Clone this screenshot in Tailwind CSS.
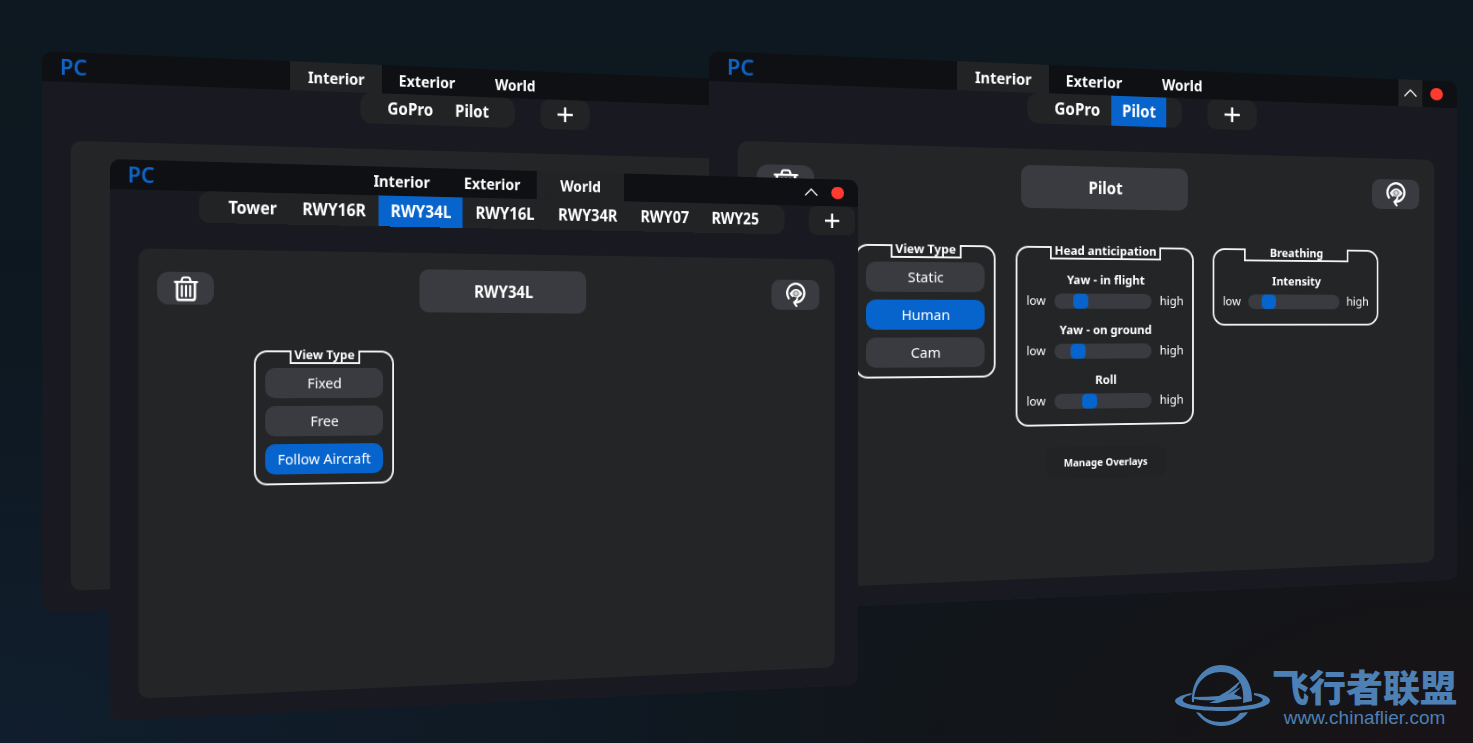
<!DOCTYPE html>
<html lang="en">
<head>
<meta charset="utf-8">
<meta name="viewport" content="width=device-width, initial-scale=1">
<title>PC camera views</title>
<script src="https://cdn.jsdelivr.net/npm/@tailwindcss/browser@4"></script>
</head>
<body class="bg-[#0d161e]">
<svg class="hidden" aria-hidden="true">
  <symbol id="trash" viewBox="0 0 26 26">
    <path d="M1.500 6.200h23M8.200 5.600l1-3.200q.3-.9 1.300-.9h5q1 0 1.300.9l1 3.200" fill="none" stroke="currentColor" stroke-width="2.200" stroke-linecap="round"/>
    <path d="M3.800 6.500v15.200q0 2.600 2.600 2.600h13.200q2.600 0 2.600-2.600V6.500" fill="none" stroke="currentColor" stroke-width="2.600"/>
    <path d="M8.700 10v10.500M13 10v10.500M17.300 10v10.500" fill="none" stroke="currentColor" stroke-width="2.200" stroke-linecap="round"/>
  </symbol>
  <symbol id="reset" viewBox="0 0 26 27">
    <path d="M4.200 17.400A10.600 10.200 0 1 1 14 21.700" fill="none" stroke="currentColor" stroke-width="2.600" stroke-linecap="round"/>
    <path d="M6.300 12.200Q9.500 7.800 13.300 7.800T20 12.200Q18.500 14.500 16 15.500Q14 17 14 19L12 24M9 15.300Q7.400 14 6.300 12.200" fill="none" stroke="currentColor" stroke-width="1.800" stroke-linecap="round"/>
    <path d="M6.300 12.200Q9.500 7.800 13.300 7.800T20 12.200Q17 16.200 13.300 16.200T6.300 12.200z" fill="currentColor" opacity=".8"/>
    <circle cx="13.300" cy="12" r="2.700" fill="none" stroke="#77787d" stroke-width="1"/>
    <path d="M14.800 18.500l-4 3.400l3 4.100" fill="none" stroke="currentColor" stroke-width="2.200" stroke-linecap="round"/>
  </symbol>
  <symbol id="caret" viewBox="0 0 18 10">
    <path d="M1.500 8.500L9 1.500l7.500 7" fill="none" stroke="currentColor" stroke-width="1.600"/>
  </symbol>
  <symbol id="plus" viewBox="0 0 18 16">
    <path d="M0 8h18M9 0v16" fill="none" stroke="currentColor" stroke-width="2.600"/>
  </symbol>
</svg>

<main class="relative min-h-screen overflow-hidden bg-[radial-gradient(ellipse_at_100%_100%,#191317_0%,#141518_16%,transparent_42%),radial-gradient(ellipse_at_0%_100%,#101d2c_0%,transparent_45%),linear-gradient(#0d1820,#0e171e)] font-['Noto_Sans'] text-white">

  <!-- Back left window -->
  <section aria-label="Interior views" class="absolute left-[42px] top-[51px] w-[845px] origin-[0_270px] rounded-[10px] bg-[#191a21] pb-[21px] [transform:perspective(322px)_rotateY(2.8deg)]">
    <header class="grid h-[30px] grid-cols-[1fr_auto_1fr] rounded-t-[10px] bg-[#0f1013]">
      <h2 class="flex h-7 items-center pl-[18px] text-[22px] font-semibold leading-7 text-[#0e65c8]">PC</h2>
      <nav class="mr-[26px] grid w-[303px] grid-cols-3 text-base font-bold">
        <button class="bg-[#222325] pt-px">Interior</button>
        <button class="pt-px">Exterior</button>
        <button class="pt-px">World</button>
      </nav>
    </header>
    <div class="grid grid-cols-[1fr_auto_1fr] text-[17px] font-bold">
      <div class="col-start-2 flex h-8 gap-px rounded-[12px] bg-[#222325] px-[18px]">
        <button class="px-3">GoPro</button>
        <button class="px-3">Pilot</button>
      </div>
      <button aria-label="Add view" class="ml-[30px] flex h-8 w-[58px] items-center justify-center rounded-[10px] bg-[#222325]"><svg class="h-4 w-[18px]"><use href="#plus"/></svg></button>
    </div>
    <div class="mx-[29px] mt-[27px] min-h-[452px] rounded-[10px] bg-[#232526]"></div>
  </section>

  <!-- Back right window -->
  <section aria-label="Pilot view" class="absolute left-[709px] top-[51px] w-[845px] origin-[0_270px] rounded-[10px] bg-[#191a21] pb-[21px] [transform:perspective(322px)_rotateY(2.8deg)]">
    <header class="grid h-[30px] grid-cols-[1fr_auto_1fr] rounded-t-[10px] bg-[#0f1013]">
      <h2 class="flex h-7 items-center pl-[18px] text-[22px] font-semibold leading-7 text-[#0e65c8]">PC</h2>
      <nav class="mr-[26px] grid w-[303px] grid-cols-3 text-base font-bold">
        <button class="bg-[#222325] pt-px">Interior</button>
        <button class="pt-px">Exterior</button>
        <button class="pt-px">World</button>
      </nav>
      <div class="flex items-center justify-end gap-[10px] pr-[18px]">
        <button aria-label="Collapse" class="flex h-[30px] w-[30px] items-center justify-center bg-[#222325]"><svg class="h-[10px] w-[18px]"><use href="#caret"/></svg></button>
        <button aria-label="Close" class="h-[14px] w-4 rounded-[50%] bg-[#ff3b30]"></button>
      </div>
    </header>
    <div class="grid grid-cols-[1fr_auto_1fr] text-[17px] font-bold">
      <div class="col-start-2 flex h-8 gap-px rounded-[12px] bg-[#222325] px-[18px]">
        <button class="px-3">GoPro</button>
        <button class="bg-[#0664cc] px-3">Pilot</button>
      </div>
      <button aria-label="Add view" class="ml-[30px] flex h-8 w-[58px] items-center justify-center rounded-[10px] bg-[#222325]"><svg class="h-4 w-[18px]"><use href="#plus"/></svg></button>
    </div>
    <div class="mx-[29px] mt-[27px] min-h-[452px] rounded-[10px] bg-[#232526] px-[19px] pt-[17px]">
      <div class="flex items-center justify-between">
        <button aria-label="Delete view" class="flex h-[33px] w-[59px] items-center justify-center rounded-[12px] bg-[#3a3b40]"><svg class="h-[26px] w-[26px]"><use href="#trash"/></svg></button>
        <button class="h-[45px] w-[189px] rounded-[10px] bg-[#3a3b40] text-[17px] font-bold">Pilot</button>
        <button aria-label="Reset view" class="flex h-[33px] w-[59px] items-center justify-center rounded-[10px] bg-[#3a3b40]"><svg class="h-[27px] w-[26px]"><use href="#reset"/></svg></button>
      </div>
      <div class="ml-[101px] mt-10 grid grid-cols-[151px_202px_200px] items-start gap-x-[22px]">
        <div role="group" aria-labelledby="vt2" class="relative flex flex-col gap-2 rounded-[14px] border-2 border-[#f2f2f3] px-[10px] pb-[9px] pt-4 text-[15px]">
          <h3 id="vt2" class="absolute -top-[2px] left-1/2 h-[14px] w-[76px] -translate-x-1/2 border-x-2 border-b-2 border-[#f2f2f3] bg-[#232526] text-center text-[13px] font-bold leading-[8px]">View Type</h3>
          <button class="h-[31px] rounded-[10px] bg-[#3a3b40]">Static</button>
          <button class="h-[31px] rounded-[10px] bg-[#0664cc]">Human</button>
          <button class="h-[31px] rounded-[10px] bg-[#3a3b40]">Cam</button>
        </div>
        <div role="group" aria-labelledby="ha" class="relative rounded-[14px] border-2 border-[#f2f2f3] px-[10px] pb-[14px] pt-[23px] text-center text-[13px]">
          <h3 id="ha" class="absolute -top-[2px] left-1/2 h-[14px] w-[126px] -translate-x-1/2 whitespace-nowrap border-x-2 border-b-2 border-[#f2f2f3] bg-[#232526] text-[13px] font-bold leading-[8px]">Head anticipation</h3>
          <div class="flex flex-col gap-[10px]">
            <div>
              <label for="yf" class="block font-bold leading-5">Yaw - in flight</label>
              <div class="mt-[3px] flex h-5 items-center justify-between"><span>low</span><input id="yf" type="range" min="0" max="100" value="23" class="h-4 w-[110px] appearance-none rounded-full bg-[#3a3b40] [&::-webkit-slider-thumb]:h-4 [&::-webkit-slider-thumb]:w-[17px] [&::-webkit-slider-thumb]:appearance-none [&::-webkit-slider-thumb]:rounded-[5px] [&::-webkit-slider-thumb]:bg-[#0664cc]"><span>high</span></div>
            </div>
            <div>
              <label for="yg" class="block font-bold leading-5">Yaw - on ground</label>
              <div class="mt-[3px] flex h-5 items-center justify-between"><span>low</span><input id="yg" type="range" min="0" max="100" value="20" class="h-4 w-[110px] appearance-none rounded-full bg-[#3a3b40] [&::-webkit-slider-thumb]:h-4 [&::-webkit-slider-thumb]:w-[17px] [&::-webkit-slider-thumb]:appearance-none [&::-webkit-slider-thumb]:rounded-[5px] [&::-webkit-slider-thumb]:bg-[#0664cc]"><span>high</span></div>
            </div>
            <div>
              <label for="rl" class="block font-bold leading-5">Roll</label>
              <div class="mt-[3px] flex h-5 items-center justify-between"><span>low</span><input id="rl" type="range" min="0" max="100" value="33" class="h-4 w-[110px] appearance-none rounded-full bg-[#3a3b40] [&::-webkit-slider-thumb]:h-4 [&::-webkit-slider-thumb]:w-[17px] [&::-webkit-slider-thumb]:appearance-none [&::-webkit-slider-thumb]:rounded-[5px] [&::-webkit-slider-thumb]:bg-[#0664cc]"><span>high</span></div>
            </div>
          </div>
        </div>
        <div role="group" aria-labelledby="br" class="relative rounded-[14px] border-2 border-[#f2f2f3] px-[10px] pb-[14px] pt-[23px] text-center text-[13px]">
          <h3 id="br" class="absolute -top-[2px] left-1/2 h-[14px] w-[126px] -translate-x-1/2 border-x-2 border-b-2 border-[#f2f2f3] bg-[#232526] text-[13px] font-bold leading-[8px]">Breathing</h3>
          <label for="in" class="block font-bold leading-5">Intensity</label>
          <div class="mt-[3px] flex h-5 items-center justify-between"><span>low</span><input id="in" type="range" min="0" max="100" value="17" class="h-4 w-[110px] appearance-none rounded-full bg-[#3a3b40] [&::-webkit-slider-thumb]:h-4 [&::-webkit-slider-thumb]:w-[17px] [&::-webkit-slider-thumb]:appearance-none [&::-webkit-slider-thumb]:rounded-[5px] [&::-webkit-slider-thumb]:bg-[#0664cc]"><span>high</span></div>
        </div>
        <button class="col-start-2 mt-[22px] h-[34px] w-[137px] justify-self-center rounded-[10px] bg-[#222324] text-[11px] font-bold">Manage Overlays</button>
      </div>
    </div>
  </section>

  <!-- Front window -->
  <section aria-label="RWY34L view" class="absolute left-[110px] top-[159px] w-[845px] origin-[0_207px] rounded-[10px] bg-[#191a21] pb-[21px] [transform:perspective(1298px)_rotateY(10deg)]">
    <header class="grid h-[30px] grid-cols-[1fr_auto_1fr] rounded-t-[10px] bg-[#0f1013]">
      <h2 class="flex h-7 items-center pl-[18px] text-[22px] font-semibold leading-7 text-[#0e65c8]">PC</h2>
      <nav class="mr-[26px] grid w-[303px] grid-cols-3 text-base font-bold">
        <button>Interior</button>
        <button>Exterior</button>
        <button class="bg-[#222325]">World</button>
      </nav>
      <div class="flex items-center justify-end gap-[10px] pr-[17px]">
        <button aria-label="Collapse" class="flex h-[30px] w-[30px] items-center justify-center"><svg class="h-[10px] w-[18px]"><use href="#caret"/></svg></button>
        <button aria-label="Close" class="h-[14px] w-4 rounded-[50%] bg-[#ff3b30]"></button>
      </div>
    </header>
    <div class="grid grid-cols-[1fr_auto_1fr] text-[17px] font-bold">
      <div class="col-start-2 flex h-8 gap-px rounded-[12px] bg-[#222325] px-[18px]">
        <button class="px-[13px]">Tower</button>
        <button class="px-[13px]">RWY16R</button>
        <button class="bg-[#0664cc] px-[13px]">RWY34L</button>
        <button class="px-[13px]">RWY16L</button>
        <button class="px-[13px]">RWY34R</button>
        <button class="px-[13px]">RWY07</button>
        <button class="px-[13px]">RWY25</button>
      </div>
      <button aria-label="Add view" class="ml-[30px] flex h-8 w-[58px] items-center justify-center rounded-[10px] bg-[#222325]"><svg class="h-4 w-[18px]"><use href="#plus"/></svg></button>
    </div>
    <div class="mx-[29px] mt-[27px] min-h-[452px] rounded-[10px] bg-[#232526] px-[19px] pt-[17px]">
      <div class="flex items-center justify-between">
        <button aria-label="Delete view" class="flex h-[33px] w-[59px] items-center justify-center rounded-[12px] bg-[#3a3b40]"><svg class="h-[26px] w-[26px]"><use href="#trash"/></svg></button>
        <button class="h-[45px] w-[189px] rounded-[10px] bg-[#3a3b40] text-[17px] font-bold">RWY34L</button>
        <button aria-label="Reset view" class="flex h-[33px] w-[59px] items-center justify-center rounded-[10px] bg-[#3a3b40]"><svg class="h-[27px] w-[26px]"><use href="#reset"/></svg></button>
      </div>
      <div class="ml-[101px] mt-10 grid grid-cols-[151px]">
        <div role="group" aria-labelledby="vt1" class="relative flex flex-col gap-2 rounded-[14px] border-2 border-[#f2f2f3] px-[10px] pb-[9px] pt-4 text-[15px]">
          <h3 id="vt1" class="absolute -top-[2px] left-1/2 h-[14px] w-[76px] -translate-x-1/2 border-x-2 border-b-2 border-[#f2f2f3] bg-[#232526] text-center text-[13px] font-bold leading-[8px]">View Type</h3>
          <button class="h-[31px] rounded-[10px] bg-[#3a3b40]">Fixed</button>
          <button class="h-[31px] rounded-[10px] bg-[#3a3b40]">Free</button>
          <button class="h-[31px] rounded-[10px] bg-[#0664cc]">Follow Aircraft</button>
        </div>
      </div>
    </div>
  </section>

  <!-- Site watermark -->
  <a href="#" class="absolute bottom-[15px] right-4 flex items-start text-[#4d80b5]">
    <svg class="h-[64px] w-[96px]" viewBox="0 0 96 64" fill="currentColor" aria-hidden="true">
      <path fill-rule="evenodd" d="M18 38C17 17 30 1 47 1C66 1 79 17 78 37L69 39C71 20 63 8 47 8C31 8 20 20 20 38z"/>
      <path d="M18 29C7 31 1 34 1 37C2 44 24 47 48 47S95 44 96 37C96 33 90 30 80 29L80 31C87 33 90 35 88 37C84 41 66 43 48 43S11 41 9 37C8 35 11 32 17 31z"/>
      <path d="M22 48C28 57 37 62 47 62C59 62 69 56 74 48L66 49C62 55 55 58 47 58C38 58 31 55 26 49z"/>
      <path d="M20 33Q34 33 45 32L55 26C60 22 64 18 67 17L62 24L53 31Q64 24 67 23L60 30L67 33L68 35L54 36L44 39L35 39L42 36Q28 37 20 35z"/>
    </svg>
    <span class="flex flex-col items-center pl-[2px]">
      <span lang="zh" class="whitespace-nowrap font-['Noto_Sans_CJK_SC',sans-serif] text-[37px] font-black leading-[44px]">飞行者联盟</span>
      <span class="whitespace-nowrap font-['Liberation_Sans',sans-serif] text-[19px] leading-5">www.chinaflier.com</span>
    </span>
  </a>
</main>
</body>
</html>
